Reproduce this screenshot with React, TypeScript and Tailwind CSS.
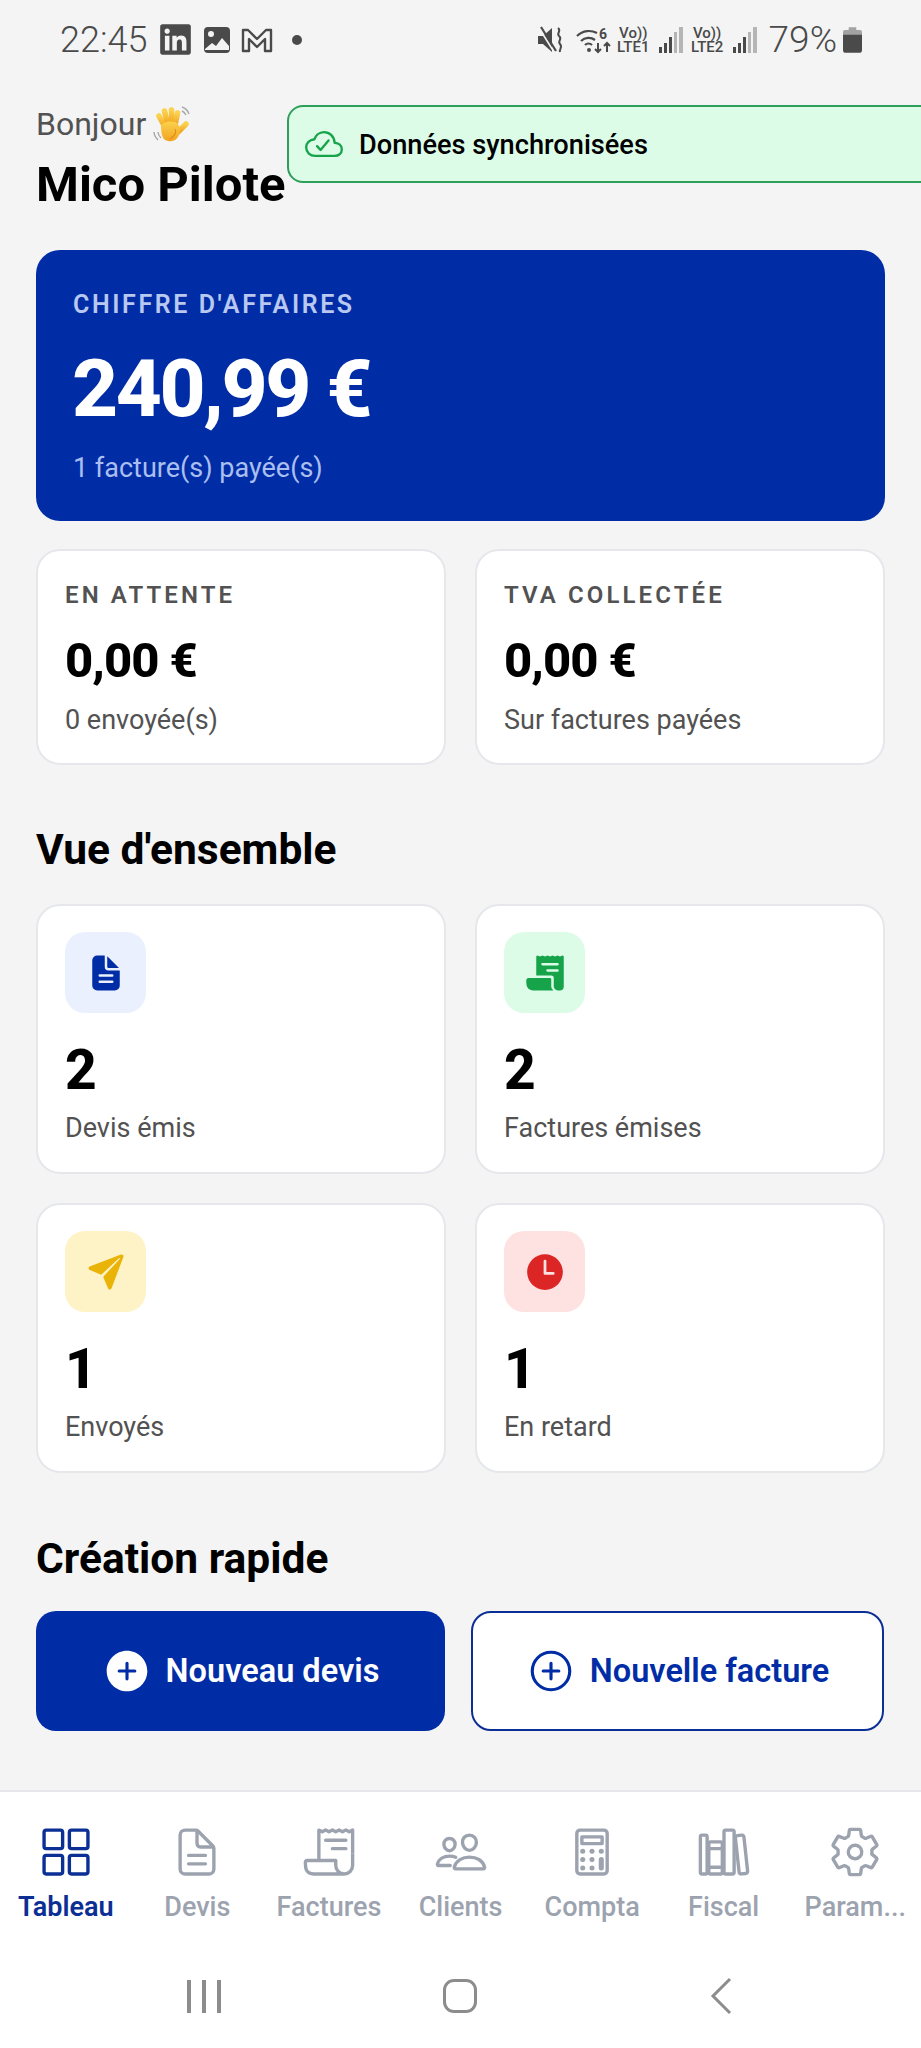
import React from 'react';
import {
  IoAddCircle,
  IoAddCircleOutline,
  IoCalculatorOutline,
  IoCloudDoneOutline,
  IoDocumentText,
  IoDocumentTextOutline,
  IoGridOutline,
  IoLibraryOutline,
  IoPaperPlane,
  IoPeopleOutline,
  IoReceipt,
  IoReceiptOutline,
  IoSettingsOutline,
  IoTime,
} from 'react-icons/io5';
import { FaLinkedin } from 'react-icons/fa';

const font = { fontFamily: 'Roboto, sans-serif' };

function WaveHand() {
  return (
    <svg width="38" height="38" viewBox="0 0 38 38" className="ml-[7px]">
      <defs>
        <linearGradient id="hand" x1="0" y1="0" x2="0" y2="1">
          <stop offset="0" stopColor="#fbd24e" />
          <stop offset="1" stopColor="#f2a31f" />
        </linearGradient>
      </defs>
      <path d="M1 27c0 3 2 6 4 8M5 27c0 2 1 4 3 6" stroke="#a8a8a8" strokeWidth="1.4" fill="none" />
      <path d="M29 2c3 1 6 4 7 7M29 6c2 1 3 2 4 4" stroke="#a8a8a8" strokeWidth="1.4" fill="none" />
      <g stroke="url(#hand)" strokeLinecap="round" fill="none" strokeWidth="5.6">
        <path d="M12 22L6 11" />
        <path d="M15 20L11.5 6" />
        <path d="M19 19L18.5 5" />
        <path d="M22 20L24.5 8" />
        <path d="M25 27L33 19" />
      </g>
      <path d="M8 20c3-4 14-5 17-1 2 3 3 6 1 11-2 5-6 7-11 6-5-1-7-5-7-16z" fill="url(#hand)" />
      <path d="M22 24c2 3 0 7-5 10" stroke="#e08e17" strokeWidth="1.2" fill="none" />
    </svg>
  );
}

function SimBlock({ label }: { label: string }) {
  return (
    <div className="flex items-end">
      <div className="flex w-[35px] flex-col items-center text-[15px] font-medium leading-[14px]">
        <span>Vo))</span>
        <span>{label}</span>
      </div>
      <div className="mb-[1px] ml-[8px] flex items-end gap-[2px]">
        <span className="h-[6px] w-[3.2px] bg-[#4a4a4a]" />
        <span className="h-[10px] w-[3.2px] bg-[#4a4a4a]" />
        <span className="h-[16px] w-[3.2px] bg-[#4a4a4a]" />
        <span className="h-[21px] w-[3.2px] bg-[#b5b5b5]" />
        <span className="h-[26px] w-[3.2px] bg-[#b5b5b5]" />
      </div>
    </div>
  );
}

function StatusBar() {
  return (
    <div className="flex h-[70px] items-center justify-between pl-[60px] pr-[59px] pt-[9px] text-[#4a4a4a]">
      <div className="flex items-center">
        <span className="text-[36px] font-light leading-none">22:45</span>
        <FaLinkedin className="ml-[11px] text-[35px]" />
        <svg width="28" height="28" viewBox="0 0 28 28" className="ml-[10px]">
          <rect x="1" y="1" width="26" height="26" rx="4" fill="#4a4a4a" />
          <circle cx="8" cy="8" r="3" fill="#f4f4f5" />
          <path d="M2 23l7-6 4 3 6-8 7 8v4H2z" fill="#f4f4f5" />
        </svg>
        <svg width="32" height="26" viewBox="0 0 32 26" className="ml-[10px]">
          <path d="M2 3h5l9 9 9-9h5v21h-6V12l-8 8-8-8v12H2z" fill="none" stroke="#4a4a4a" strokeWidth="2.4" strokeLinejoin="round" />
        </svg>
        <span className="ml-[19px] h-[10px] w-[10px] rounded-full bg-[#4a4a4a]" />
      </div>
      <div className="flex items-center">
        <svg width="26" height="28" viewBox="0 0 26 28">
          <path d="M0 10h5l9-8v24l-9-8H0z" fill="#4a4a4a" />
          <path d="M1 2l15 24" stroke="#f4f4f5" strokeWidth="1.6" />
          <path d="M3 1l15 24" stroke="#4a4a4a" strokeWidth="2.2" />
          <path d="M20 2c4 3-2 5 1 8 4 3-2 5 1 8 3 3-1 5 0 8" fill="none" stroke="#4a4a4a" strokeWidth="2" />
        </svg>
        <svg width="36" height="28" viewBox="0 0 36 28" className="ml-[12px]">
          <path d="M1 10c6-6 14-6 20-3M5 15c4-4 10-4 14-1M9 19c2-2 5-2 7 0" fill="none" stroke="#4a4a4a" strokeWidth="2.2" />
          <circle cx="13" cy="24" r="2" fill="#4a4a4a" />
          <path d="M22 17v9M19 23l3 3 3-3M31 26v-9M28 20l3-3 3 3" fill="none" stroke="#4a4a4a" strokeWidth="2" />
          <text x="23" y="13" fontSize="14" fontWeight="700" fill="#4a4a4a" fontFamily="Roboto, sans-serif">6</text>
        </svg>
        <div className="ml-[4px]">
          <SimBlock label="LTE1" />
        </div>
        <div className="ml-[7px]">
          <SimBlock label="LTE2" />
        </div>
        <span className="ml-[12px] text-[37px] font-light leading-none">79%</span>
        <svg width="19" height="27" viewBox="0 0 20 28" className="ml-[6px]">
          <path d="M6 1h8v3h4a2 2 0 012 2v4H0V6a2 2 0 012-2h4z" fill="#a3a3a3" />
          <path d="M0 9h20v16a3 3 0 01-3 3H3a3 3 0 01-3-3z" fill="#4a4a4a" />
        </svg>
      </div>
    </div>
  );
}

function SummaryCard({ title, value, sub }: { title: string; value: string; sub: string }) {
  return (
    <div className="h-[216px] rounded-[24px] border-2 border-[#e5e7eb] bg-white pl-[27px] pt-[30px]">
      <div className="text-[24px] font-semibold leading-[28px] tracking-[3.1px] text-[#525252]">{title}</div>
      <div className="mt-[24px] text-[49px] font-extrabold leading-[56px] tracking-[-1px] text-black">{value}</div>
      <div className="mt-[14px] text-[27px] leading-[34px] text-[#525252]">{sub}</div>
    </div>
  );
}

function StatCard({ icon, iconBg, value, label }: { icon: React.ReactNode; iconBg: string; value: string; label: string }) {
  return (
    <div className="h-[270px] rounded-[24px] border-2 border-[#e5e7eb] bg-white pl-[27px] pt-[26px]">
      <div className={`flex h-[81px] w-[81px] items-center justify-center rounded-[20px] ${iconBg}`}>{icon}</div>
      <div className="mt-[27px] text-[55px] font-extrabold leading-[60px] text-black">{value}</div>
      <div className="mt-[12px] text-[27px] leading-[32px] text-[#525252]">{label}</div>
    </div>
  );
}

function NavItem({ icon, label, active }: { icon: React.ReactNode; label: string; active?: boolean }) {
  return (
    <div className={`flex min-w-0 flex-1 flex-col items-center ${active ? 'text-[#0b2f94]' : 'text-[#9ca3af]'}`}>
      <div className="flex h-[54px] items-center text-[54px]">{icon}</div>
      <div className={`mt-[12px] whitespace-nowrap text-[27px] leading-[32px] ${active ? 'font-semibold' : 'font-medium'}`}>{label}</div>
    </div>
  );
}

export default function App() {
  return (
    <div className="relative flex h-[2048px] w-[921px] flex-col overflow-hidden bg-[#f4f4f5]" style={font}>
      <StatusBar />

      {/* Toast */}
      <div className="absolute left-[287px] right-[-20px] top-[105px] flex h-[78px] items-center rounded-[16px] border-2 border-[#2f9e5b] bg-[#dcfce7] pl-[16px]">
        <IoCloudDoneOutline className="text-[38px] text-[#16a34a]" />
        <span className="ml-[16px] mt-[2px] text-[27.2px] font-medium text-black">Données synchronisées</span>
      </div>

      <main className="flex-1 px-[36px]">
        {/* Greeting */}
        <div className="mt-[34px] flex h-[40px] items-center text-[32px] text-[#525252]">
          Bonjour
          <WaveHand />
        </div>
        <h1 className="mt-[14px] text-[49px] font-bold leading-[54px] text-black">Mico Pilote</h1>

        {/* Revenue */}
        <div className="mt-[38px] h-[271px] rounded-[24px] bg-[#002da6] pl-[37px] pt-[41px]">
          <div className="text-[25px] font-semibold leading-[28px] tracking-[2.6px] text-[#b9c8f0]">CHIFFRE D'AFFAIRES</div>
          <div className="-ml-[1px] mt-[26px] text-[80px] font-extrabold leading-[88px] tracking-[-2.4px] text-white">240,99 €</div>
          <div className="mt-[18px] text-[27px] leading-[34px] text-[#aabff0]">1 facture(s) payée(s)</div>
        </div>

        <div className="mt-[28px] grid grid-cols-2 gap-[29px]">
          <SummaryCard title="EN ATTENTE" value="0,00 €" sub="0 envoyée(s)" />
          <SummaryCard title="TVA COLLECTÉE" value="0,00 €" sub="Sur factures payées" />
        </div>

        <h2 className="mt-[62px] text-[42.5px] font-bold leading-[46px] text-black">Vue d'ensemble</h2>

        <div className="mt-[31px] grid grid-cols-2 gap-x-[29px] gap-y-[29px]">
          <StatCard icon={<IoDocumentText className="text-[40px] text-[#002da6]" />} iconBg="bg-[#eaf0fe]" value="2" label="Devis émis" />
          <StatCard icon={<IoReceipt className="text-[40px] text-[#16a34a]" />} iconBg="bg-[#dcfce7]" value="2" label="Factures émises" />
          <StatCard icon={<IoPaperPlane className="text-[40px] text-[#eab308]" />} iconBg="bg-[#fef3c7]" value="1" label="Envoyés" />
          <StatCard icon={<IoTime className="text-[44px] text-[#dc2626]" />} iconBg="bg-[#fee2e2]" value="1" label="En retard" />
        </div>

        <h2 className="mt-[63px] text-[42.5px] font-bold leading-[46px] text-black">Création rapide</h2>

        <div className="mt-[29px] grid grid-cols-[409px_413px] gap-[26px]">
          <button className="flex h-[120px] items-center justify-center gap-[14px] rounded-[20px] bg-[#002da6] text-[32.5px] font-semibold text-white">
            <IoAddCircle className="text-[50px]" />
            Nouveau devis
          </button>
          <button className="flex h-[120px] items-center justify-center gap-[14px] rounded-[20px] border-2 border-[#0b2f94] bg-white text-[32.5px] font-semibold text-[#002da6]">
            <IoAddCircleOutline className="text-[50px]" />
            Nouvelle facture
          </button>
        </div>
      </main>

      {/* Bottom tabs */}
      <nav className="h-[258px] border-t-2 border-[#e5e7eb] bg-white">
        <div className="flex pt-[33px]">
          <NavItem active icon={<IoGridOutline />} label="Tableau" />
          <NavItem icon={<IoDocumentTextOutline />} label="Devis" />
          <NavItem icon={<IoReceiptOutline />} label="Factures" />
          <NavItem icon={<IoPeopleOutline />} label="Clients" />
          <NavItem icon={<IoCalculatorOutline />} label="Compta" />
          <NavItem icon={<IoLibraryOutline />} label="Fiscal" />
          <NavItem icon={<IoSettingsOutline />} label="Param..." />
        </div>

        {/* Android navigation */}
        <div className="mt-[54px] flex items-center pl-[187px]">
          <div className="flex gap-[11px]">
            <span className="h-[33px] w-[4px] bg-[#8c8c8c]" />
            <span className="h-[33px] w-[4px] bg-[#8c8c8c]" />
            <span className="h-[33px] w-[4px] bg-[#8c8c8c]" />
          </div>
          <span className="ml-[222px] h-[34px] w-[34px] rounded-[11px] border-[3px] border-[#8c8c8c]" />
          <svg width="24" height="38" viewBox="0 0 24 38" className="ml-[232px]">
            <path d="M21 2L4 19l17 17" fill="none" stroke="#8c8c8c" strokeWidth="3" />
          </svg>
        </div>
      </nav>
    </div>
  );
}
